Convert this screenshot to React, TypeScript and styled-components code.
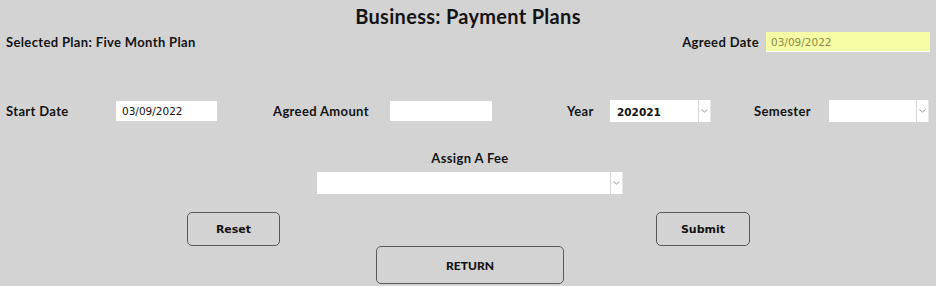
import React from "react";
import styled, { createGlobalStyle } from "styled-components";

const Global = createGlobalStyle`
  html, body { margin: 0; padding: 0; background: #d3d3d3; }
  body { font-family: "Lato", "DejaVu Sans", sans-serif; color: #111; }
  * { box-sizing: border-box; }
`;

const Page = styled.div`
  width: 936px;
  height: 286px;
  background: #d3d3d3;
  display: flex;
  flex-direction: column;
  overflow: hidden;
`;

const Title = styled.h1`
  margin: 0;
  height: 31px;
  display: flex;
  align-items: center;
  justify-content: center;
  font-family: "Lato", sans-serif;
  font-weight: 700;
  font-size: 20px;
  letter-spacing: 0.3px;
  color: #141414;
`;

const TopRow = styled.div`
  height: 22px;
  display: flex;
  align-items: center;
  justify-content: space-between;
  padding: 0 6px 0 6px;
`;

const Label = styled.span`
  font-family: "Lato", sans-serif;
  font-weight: 700;
  font-size: 13px;
  letter-spacing: 0.35px;
  color: #141414;
  white-space: nowrap;
`;

const Group = styled.div`
  display: flex;
  align-items: center;
  gap: 7px;
`;

const TextBox = styled.div<{ $w: number; $yellow?: boolean }>`
  width: ${(p) => p.$w}px;
  height: 20px;
  background: ${(p) => (p.$yellow ? "#f6fba6" : "#ffffff")};
  border-bottom: 1px solid #ffffff;
  display: flex;
  align-items: center;
  padding-left: ${(p) => (p.$yellow ? 5 : 6)}px;
  font-family: "DejaVu Sans", Tahoma, sans-serif;
  font-size: 10.5px;
  color: ${(p) => (p.$yellow ? "#8a8a44" : "#111")};
`;

const FieldRow = styled.div`
  margin-top: 47px;
  height: 22px;
  display: grid;
  grid-template-columns: 110px 101px 56px 117px 102px 75px 43px 101px 43px 75px 100px;
  align-items: center;
  padding-left: 6px;
`;

const Spacer = styled.div``;

const SelectBox = styled.div<{ $w: number }>`
  width: ${(p) => p.$w}px;
  height: 22px;
  background: #ffffff;
  display: flex;
  align-items: stretch;
`;

const SelectValue = styled.div`
  flex: 1;
  display: flex;
  align-items: center;
  padding-left: 7px;
  padding-top: 1px;
  font-family: "DejaVu Sans", Tahoma, sans-serif;
  font-weight: 700;
  font-size: 10.5px;
  color: #111;
  border-right: 1px solid #d6d6d6;
`;

const SelectButton = styled.div`
  width: 12px;
  display: flex;
  align-items: center;
  justify-content: center;
  border-right: 1px solid #e6e6e6;
`;

const Chevron = () => (
  <svg width="7" height="4" viewBox="0 0 7 4">
    <path d="M0.5 0.5 L3.5 3 L6.5 0.5" fill="none" stroke="#9a9a9a" strokeWidth="1" />
  </svg>
);

const FeeSection = styled.div`
  margin-top: 28px;
  display: flex;
  flex-direction: column;
  align-items: center;
  gap: 6px;
  padding-left: 4px;
`;

const ButtonRow = styled.div`
  margin-top: 18px;
  height: 34px;
  display: grid;
  grid-template-columns: 187px 93px 376px 94px;
  align-items: stretch;
`;

const Button = styled.button`
  height: 100%;
  background: #d3d3d3;
  border: 1px solid #5a5a5a;
  border-radius: 5px;
  font-family: "DejaVu Sans", Tahoma, sans-serif;
  font-weight: 700;
  font-size: 11px;
  color: #141414;
  padding: 0;
  cursor: pointer;
`;

const ReturnRow = styled.div`
  height: 38px;
  display: flex;
  padding-left: 376px;
`;

const ReturnButton = styled(Button)`
  width: 188px;
  height: 38px;
  font-family: "Lato", sans-serif;
  font-size: 12px;
  font-weight: 900;
`;

export default function App() {
  return (
    <>
      <Global />
      <Page>
        <Title>Business: Payment Plans</Title>
        <TopRow>
          <Label>Selected Plan: Five Month Plan</Label>
          <Group>
            <Label>Agreed Date</Label>
            <TextBox $w={164} $yellow>03/09/2022</TextBox>
          </Group>
        </TopRow>
        <FieldRow>
          <Label>Start Date</Label>
          <TextBox $w={101}>03/09/2022</TextBox>
          <Spacer />
          <Label>Agreed Amount</Label>
          <TextBox $w={102} />
          <Spacer />
          <Label>Year</Label>
          <SelectBox $w={101}>
            <SelectValue>202021</SelectValue>
            <SelectButton><Chevron /></SelectButton>
          </SelectBox>
          <Spacer />
          <Label>Semester</Label>
          <SelectBox $w={100}>
            <SelectValue />
            <SelectButton><Chevron /></SelectButton>
          </SelectBox>
        </FieldRow>
        <FeeSection>
          <Label>Assign A Fee</Label>
          <SelectBox $w={306}>
            <SelectValue />
            <SelectButton><Chevron /></SelectButton>
          </SelectBox>
        </FeeSection>
        <ButtonRow>
          <Spacer />
          <Button>Reset</Button>
          <Spacer />
          <Button>Submit</Button>
        </ButtonRow>
        <ReturnRow>
          <ReturnButton>RETURN</ReturnButton>
        </ReturnRow>
      </Page>
    </>
  );
}
